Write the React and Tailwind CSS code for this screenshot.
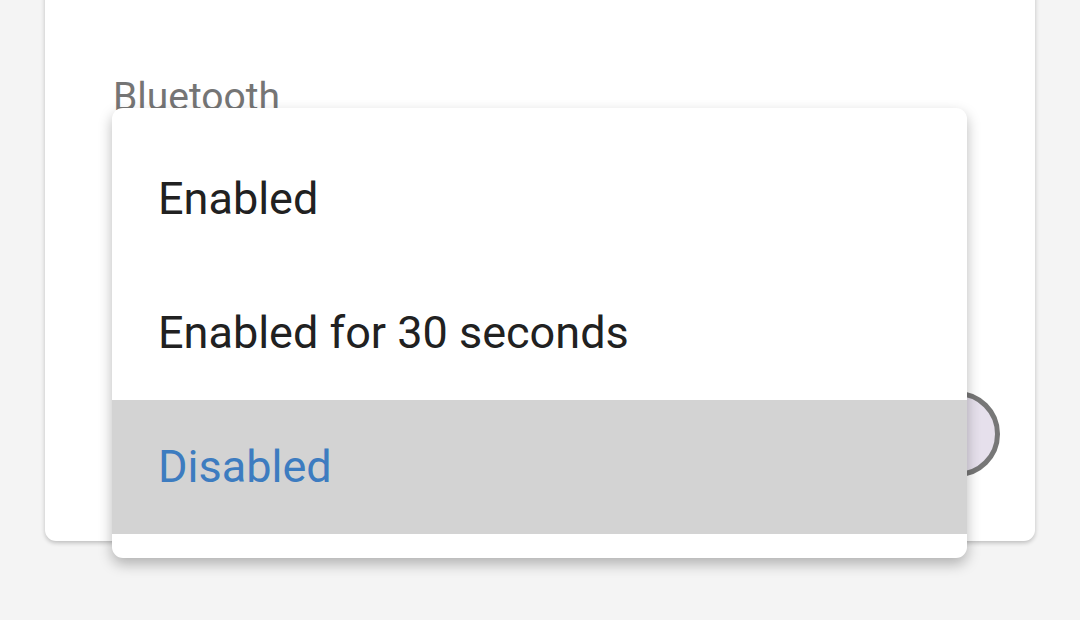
const options = [
  { label: "Enabled", selected: false },
  { label: "Enabled for 30 seconds", selected: false },
  { label: "Disabled", selected: true },
];

const App = () => {
  return (
    <div
      className="relative h-[620px] w-[1080px] overflow-hidden bg-[#f4f4f4]"
      style={{ fontFamily: "Roboto, 'Noto Sans', sans-serif" }}
    >
      {/* settings card */}
      <div className="ml-[45px] -mt-[20px] flex h-[561px] w-[990px] flex-col rounded-[11px] bg-white shadow-[0_2px_4px_rgba(0,0,0,0.22)]">
        <div className="pl-[68px] pt-[98px] text-[39px] leading-[39px] text-[#757575]">
          Bluetooth
        </div>
        <div className="mt-[274px] flex justify-end pr-[35px]">
          <div className="h-[86px] w-[86px] rounded-full border-[5px] border-[#777777] bg-[#e6e0ec]" />
        </div>
      </div>

      {/* dropdown menu */}
      <div className="absolute left-[112px] top-[108px] w-[855px] rounded-[11px] bg-white py-[24px] shadow-[0_6px_14px_rgba(0,0,0,0.28)]">
        {options.map((opt) => (
          <div
            key={opt.label}
            className={`h-[134px] pl-[46px] text-[45px] leading-[134px] ${
              opt.selected ? "bg-[#d3d3d3] text-[#3d7cc0]" : "text-[#212121]"
            }`}
          >
            {opt.label}
          </div>
        ))}
      </div>
    </div>
  );
};

export default App;
